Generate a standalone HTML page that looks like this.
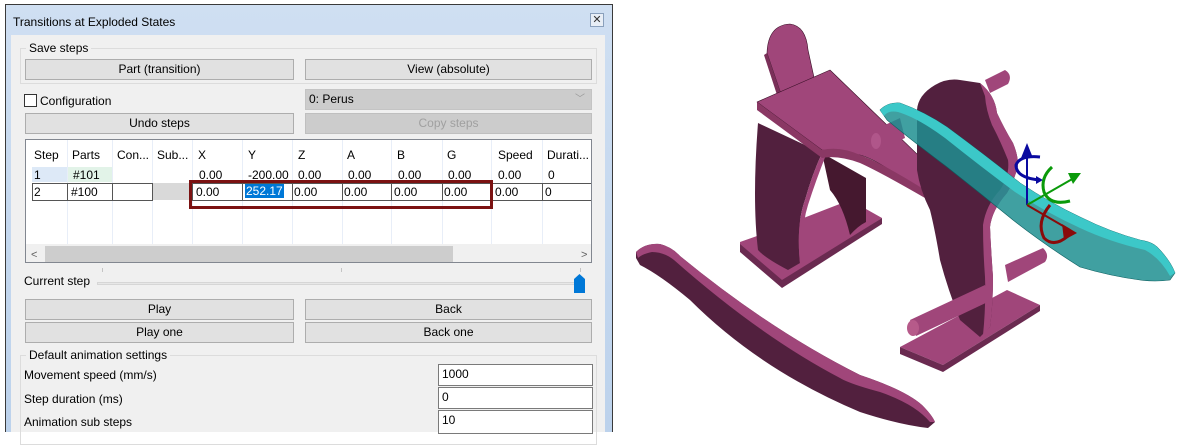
<!DOCTYPE html>
<html><head><meta charset="utf-8"><style>
*{margin:0;padding:0;box-sizing:border-box}
body{width:1188px;height:432px;background:#fff;position:relative;overflow:hidden;font-family:"Liberation Sans",sans-serif;font-size:12px;color:#000}
.a{position:absolute}
.btn{position:absolute;background:#e1e1e1;border:1px solid #adadad;text-align:center;line-height:18px}
.grp{position:absolute;border:1px solid #dcdcdc}
.gl{position:absolute;background:#f0f0f0;padding:0 3px}
.inp{position:absolute;background:#fff;border:1px solid #7a7a7a;padding-left:3px;line-height:18px}
.t{position:absolute;white-space:nowrap}
</style></head><body>
<div class="a" style="left:5px;top:4px;width:608px;height:428px;border:1px solid #3a3a3a;border-bottom:none;background:linear-gradient(#cfdff2,#bcd2ec)"></div>
<div class="t" style="left:13px;top:15px;font-size:12px">Transitions at Exploded States</div>
<div class="a" style="left:590px;top:13px;width:14px;height:14px;border:1px solid #8aa0bc;background:#e8eef6;font-size:11px;line-height:12px;text-align:center;color:#333">✕</div>
<div class="a" style="left:11px;top:35px;width:594px;height:397px;background:#f0f0f0"></div>

<div class="grp" style="left:20px;top:48px;width:577px;height:36px"></div>
<div class="gl t" style="left:26px;top:41px">Save steps</div>
<div class="btn" style="left:25px;top:59px;width:269px;height:21px">Part (transition)</div>
<div class="btn" style="left:305px;top:59px;width:287px;height:21px">View (absolute)</div>

<div class="a" style="left:24px;top:94px;width:13px;height:13px;border:1px solid #333;background:#fff"></div>
<div class="t" style="left:40px;top:94px">Configuration</div>
<div class="a" style="left:305px;top:89px;width:287px;height:21px;background:#cccccc;border:1px solid #c4c4c4;padding-left:3px;line-height:19px">0: Perus<span style="position:absolute;right:6px;color:#999;font-size:10px">﹀</span></div>
<div class="btn" style="left:25px;top:113px;width:269px;height:21px">Undo steps</div>
<div class="btn" style="left:305px;top:113px;width:287px;height:21px;background:#cccccc;border-color:#bfbfbf;color:#a0a0a0">Copy steps</div>

<div class="a" style="left:25px;top:139px;width:567px;height:124px;border:1px solid #828790;background:#fff;overflow:hidden">
<svg class="a" style="left:0;top:0" width="567" height="124">
<g stroke="#e8eef8" stroke-width="1">
<line x1="41.5" y1="0" x2="41.5" y2="104"/><line x1="86.5" y1="0" x2="86.5" y2="104"/><line x1="126.5" y1="0" x2="126.5" y2="104"/><line x1="166.5" y1="0" x2="166.5" y2="104"/><line x1="216.5" y1="0" x2="216.5" y2="104"/><line x1="266.5" y1="0" x2="266.5" y2="104"/><line x1="316.5" y1="0" x2="316.5" y2="104"/><line x1="365.5" y1="0" x2="365.5" y2="104"/><line x1="416.5" y1="0" x2="416.5" y2="104"/><line x1="465.5" y1="0" x2="465.5" y2="104"/><line x1="516.5" y1="0" x2="516.5" y2="104"/>
</g>
<rect x="6" y="27" width="35" height="15" fill="#dde9f7"/>
<rect x="42" y="27" width="44" height="15" fill="#e2f3e8"/>
<rect x="127" y="43" width="39" height="17" fill="#d9d9d9"/>
<g fill="none" stroke="#555" stroke-width="1">
<rect x="6.5" y="43.5" width="35" height="17"/><rect x="41.5" y="43.5" width="45" height="17"/><rect x="86.5" y="43.5" width="40" height="17"/>
<rect x="166.5" y="43.5" width="50" height="17"/><rect x="216.5" y="43.5" width="50" height="17"/><rect x="266.5" y="43.5" width="50" height="17"/><rect x="316.5" y="43.5" width="49" height="17"/><rect x="365.5" y="43.5" width="51" height="17"/><rect x="416.5" y="43.5" width="49" height="17"/><rect x="465.5" y="43.5" width="51" height="17"/><rect x="516.5" y="43.5" width="60" height="17"/>
</g>
<rect x="164.5" y="41.5" width="301" height="26" fill="none" stroke="#7b1212" stroke-width="3"/>
<rect x="0" y="104" width="567" height="20" fill="#f0f0f0"/>
<rect x="19" y="106" width="408" height="16" fill="#cdcdcd"/>
<text x="5" y="118" font-size="11" fill="#606060">&lt;</text><text x="555" y="118" font-size="11" fill="#606060">&gt;</text>
</svg>
<div class="t" style="left:8px;top:8px">Step</div><div class="t" style="left:46px;top:8px">Parts</div><div class="t" style="left:91px;top:8px">Con...</div><div class="t" style="left:131px;top:8px">Sub...</div><div class="t" style="left:172px;top:8px">X</div><div class="t" style="left:222px;top:8px">Y</div><div class="t" style="left:272px;top:8px">Z</div><div class="t" style="left:321px;top:8px">A</div><div class="t" style="left:371px;top:8px">B</div><div class="t" style="left:421px;top:8px">G</div><div class="t" style="left:472px;top:8px">Speed</div><div class="t" style="left:521px;top:8px">Durati...</div>
<div class="t" style="left:8px;top:28px">1</div><div class="t" style="left:47px;top:28px">#101</div><div class="t" style="left:173px;top:28px">0.00</div><div class="t" style="left:222px;top:28px">-200.00</div><div class="t" style="left:272px;top:28px">0.00</div><div class="t" style="left:322px;top:28px">0.00</div><div class="t" style="left:372px;top:28px">0.00</div><div class="t" style="left:422px;top:28px">0.00</div><div class="t" style="left:472px;top:28px">0.00</div><div class="t" style="left:522px;top:28px">0</div>
<div class="t" style="left:8px;top:45px">2</div><div class="t" style="left:45px;top:45px">#100</div><div class="t" style="left:170px;top:45px">0.00</div><div class="t" style="left:219px;top:44px;background:#0078d7;color:#fff;padding:0 1px">252.17</div><div class="t" style="left:268px;top:45px">0.00</div><div class="t" style="left:318px;top:45px">0.00</div><div class="t" style="left:368px;top:45px">0.00</div><div class="t" style="left:418px;top:45px">0.00</div><div class="t" style="left:469px;top:45px">0.00</div><div class="t" style="left:519px;top:45px">0</div>
</div>

<div class="t" style="left:24px;top:274px">Current step</div>
<div class="a" style="left:97px;top:282px;width:487px;height:3px;background:#e7e7e7;border:1px solid #d6d6d6"></div>
<div class="a" style="left:102px;top:268px;width:1px;height:4px;background:#c4c4c4"></div>
<div class="a" style="left:341px;top:268px;width:1px;height:4px;background:#c4c4c4"></div>
<div class="a" style="left:580px;top:268px;width:1px;height:4px;background:#c4c4c4"></div>
<svg class="a" style="left:574px;top:274px" width="11" height="19"><path d="M0 5 L5.5 0 L11 5 L11 19 L0 19Z" fill="#0078d7"/></svg>

<div class="btn" style="left:25px;top:299px;width:269px;height:21px">Play</div>
<div class="btn" style="left:305px;top:299px;width:287px;height:21px">Back</div>
<div class="btn" style="left:25px;top:322px;width:269px;height:21px">Play one</div>
<div class="btn" style="left:305px;top:322px;width:287px;height:21px">Back one</div>

<div class="grp" style="left:20px;top:355px;width:577px;height:90px"></div>
<div class="gl t" style="left:26px;top:348px">Default animation settings</div>
<div class="t" style="left:24px;top:368px">Movement speed (mm/s)</div>
<div class="t" style="left:24px;top:392px">Step duration (ms)</div>
<div class="t" style="left:24px;top:415px">Animation sub steps</div>
<div class="inp" style="left:438px;top:364px;width:155px;height:22px">1000</div>
<div class="inp" style="left:438px;top:387px;width:155px;height:22px">0</div>
<div class="inp" style="left:438px;top:410px;width:155px;height:24px">10</div>

<svg class="a" style="left:620px;top:0" width="568" height="432" viewBox="620 0 568 432" stroke-linejoin="round">
<!-- left rocker -->
<path d="M636 252 Q645 243 660 244 Q672 247 680 256 Q770 330 860 375 Q905 390 922 405 Q932 415 935 422 L928 428 Q900 425 860 412 Q760 370 690 300 Q660 275 640 265 L636 258Z" fill="#52203e"/>
<path d="M636 252 Q645 243 660 244 Q672 247 680 256 Q770 330 860 375 Q905 390 922 405 Q932 415 935 422 L930 422 Q915 404 880 392 Q850 384 840 378 Q760 336 674 260 Q664 252 652 252 Q642 254 638 258Z" fill="#a0467a"/>
<!-- left base -->
<path d="M740 242 L757 236 L850 200 L882 218 L782 282 L740 250Z" fill="#a0467a"/>
<path d="M740 244 L782 280 L882 218 L882 224 L782 288 L740 252Z" fill="#6a2a50"/>
<!-- inner back leg -->
<path d="M822 153 L866 178 L866 222 Q858 226 850 235 Q843 205 830 190Z" fill="#45182f"/>
<!-- front leg -->
<path d="M758 123 L822 153 Q812 175 805 200 Q796 225 800 263 L788 270 Q765 258 758 250 Q752 200 758 123Z" fill="#52203e"/>
<path d="M822 153 L826 155 Q816 180 808 205 Q800 230 805 262 L800 264 Q796 225 805 200 Q812 175 822 153Z" fill="#a0467a"/>
<!-- head post -->
<path d="M767 53 Q768 25 790 24 Q806 26 808 50 L815 82 L783 100 Z" fill="#a0467a" stroke="#3a1028" stroke-width="0.6"/>
<path d="M767 53 L783 100 L778 98 L764 55Z" fill="#7a3059"/>
<!-- seat -->
<path d="M757 102 L830 70 L948 184 L925 196 Q880 160 860 155 Q835 150 822 150 Z" fill="#a0467a" stroke="#3a1028" stroke-width="0.6"/>
<path d="M757 102 L822 150 Q840 146 860 155 Q880 162 925 190 L925 198 Q880 172 860 163 Q838 155 822 158 L757 110Z" fill="#8a3864"/>
<!-- middle dowel -->
<path d="M870 132 L900 118 L905 138 L878 150Z" fill="#a0467a"/>
<ellipse cx="876" cy="141" rx="5" ry="8" fill="#b0568a"/>
<!-- right base -->
<path d="M900 347 L1007 290 L1040 305 L943 365Z" fill="#a0467a"/>
<path d="M900 347 L943 365 L1040 305 L1040 311 L943 372 L900 354Z" fill="#6a2a50"/>
<!-- back bottom dowel -->
<path d="M1005 265 L1043 248 Q1050 255 1045 262 L1008 282Z" fill="#a0467a"/>
<!-- right leg -->
<path d="M917 110 Q918 95 935 85 Q947 78 960 80 L980 83 Q995 95 997 113 Q1005 130 1013 143 Q1020 160 1017 170 Q1012 185 1007 193 Q992 210 990 227 Q991 250 993 277 Q993 305 990 327 L980 337 L960 320 Q948 290 940 260 Q935 230 930 210 Q920 190 917 170Z" fill="#52203e"/>
<path d="M980 83 Q995 95 997 113 Q1005 130 1013 143 Q1020 160 1017 170 Q1012 185 1007 193 Q992 210 990 227 Q991 250 993 277 Q993 305 990 327 L983 335 Q986 305 985 277 Q983 250 983 225 Q986 205 1000 190 Q1010 175 1008 160 Q1000 140 992 125 Q986 110 985 96Z" fill="#a0467a"/>
<!-- top dowel -->
<path d="M985 80 L1005 70 Q1013 75 1008 84 L990 93Z" fill="#a0467a"/>
<!-- front bottom dowel -->
<path d="M910 320 L985 285 L992 300 L916 336Z" fill="#a0467a"/>
<ellipse cx="913" cy="328" rx="6" ry="8" fill="#b65a8a"/>
<!-- teal rocker -->
<path d="M880 110 Q888 102 900 103 Q925 112 947 127 Q985 155 1020 183 Q1050 203 1080 217 Q1110 232 1140 240 Q1152 242 1157 247 Q1170 260 1175 273 L1170 280 Q1155 282 1140 280 Q1110 276 1080 267 Q1045 245 1013 220 Q980 193 947 167 Q915 143 887 120Z" fill="#1f8f90" fill-opacity="0.85" stroke="#0c5f60" stroke-width="0.6"/>
<path d="M880 110 Q888 102 900 103 Q925 112 947 127 Q985 155 1020 183 Q1050 203 1080 217 Q1110 232 1140 240 Q1152 242 1157 247 Q1170 260 1175 273 L1170 276 Q1160 258 1145 250 Q1110 242 1080 228 Q1045 212 1015 192 Q980 166 945 138 Q918 118 898 112 Q888 110 884 116Z" fill="#3cc8c8"/>
<!-- triad -->
<path d="M1027 205 L1027 152" stroke="#0a0aa0" stroke-width="2"/>
<path d="M1021 158 L1027 143 L1033 158Z" fill="#0a0aa0"/>
<path d="M1040 157 Q1020 155 1016 165 Q1016 178 1040 180" fill="none" stroke="#0a0aa0" stroke-width="3"/>
<path d="M1036 176 L1043 180 L1036 184Z" fill="#0a0aa0"/>
<path d="M1027 205 L1074 178" stroke="#0a9a0a" stroke-width="2"/>
<path d="M1068 173 L1081 173 L1073 184Z" fill="#0a9a0a"/>
<path d="M1052 167 Q1040 178 1044 192 Q1050 206 1070 201" fill="none" stroke="#0a9a0a" stroke-width="3"/>
<path d="M1027 205 L1070 230" stroke="#8a0a0a" stroke-width="2"/>
<path d="M1050 205 Q1036 222 1044 238 Q1054 248 1068 236" fill="none" stroke="#8a0a0a" stroke-width="3"/>
<path d="M1062 224 L1077 233 L1064 240Z" fill="#8a0a0a"/>
</svg>
</body></html>
